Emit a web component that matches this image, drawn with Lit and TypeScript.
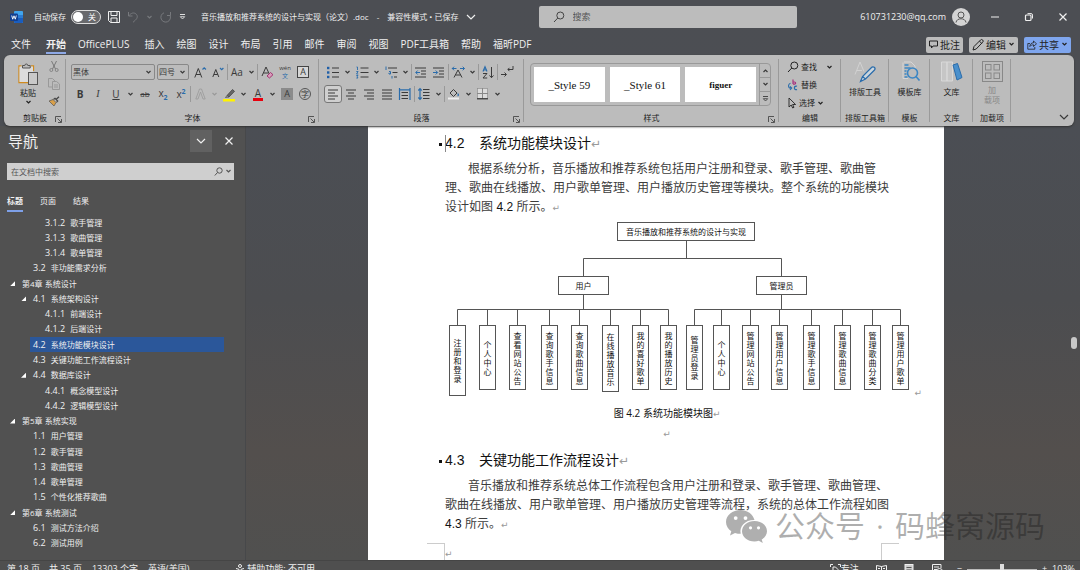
import { LitElement, html, svg, css, nothing, TemplateResult, SVGTemplateResult } from "lit";
import { customElement, state } from "lit/decorators.js";
import { classMap } from "lit/directives/class-map.js";
import { styleMap } from "lit/directives/style-map.js";

const icon = (w: number, h: number, body: SVGTemplateResult): TemplateResult =>
  html`<svg class="ic" width=${w} height=${h} viewBox="0 0 ${w} ${h}" fill="none" stroke="currentColor" aria-hidden="true">${body}</svg>`;

const chevron = icon(7, 5, svg`<path d="M1.500 1l2 2 2-2" stroke-width="1.200"/>`);
const chevronL = icon(10, 6, svg`<path d="M1 1l4 4 4-4" stroke-width="1.200"/>`);
const lens = icon(12, 12, svg`<circle cx="7.300" cy="4.500" r="3.500"/><path d="M4.800 7L1 11"/>`);
const launcher = icon(7, 7, svg`<path d="M.5 6V.5H6M2.500 2.500l3.500 3.500M6.500 3v3.500H3" stroke-width=".8"/>`);

const bars = (rows: number[][]) => svg`${rows.map(([x, y, w]) => svg`<path d="M${x} ${y}h${w}"/>`)}`;
const BLUE = "#2a6cab";

const I = {
  word: icon(13, 12, svg`<rect x="4" y="0" width="9" height="12" rx="1" fill="#41a5ee" stroke="none"/><path d="M4 4h9v3H4z" fill="#2b7cd3" stroke="none"/><path d="M4 7h9v4a1 1 0 0 1-1 1H5a1 1 0 0 1-1-1z" fill="#1a5dbe" stroke="none"/><rect x="0" y="2.500" width="8" height="7.500" rx="1" fill="#103f91" stroke="none"/><path d="M1.700 4.500l1 3.700L4 4.800l1.300 3.400 1-3.700" stroke="#fff" stroke-width=".9"/>`),
  save: icon(12, 12, svg`<path d="M.5 .5h11v11h-9l-2-2zM3 .5v4h6v-4M3 11.500v-4.500h6v4.500"/>`),
  undo: icon(12, 12, svg`<path d="M1.500 1v4h4M1.800 4.800C4 1.800 7 1.200 9 3s1.500 4.200-.5 6L6 11.300"/>`),
  redo: icon(12, 12, svg`<path d="M10.500 1v3.500H7M10 4.200A4.800 4.800 0 1 1 4 1.800"/>`),
  more: icon(7, 6, svg`<path d="M1 .5h5" stroke-width=".9"/><path d="M1.300 2.700h4.400L3.500 5z" stroke-width=".8"/>`),
  user: icon(18, 18, svg`<circle cx="9" cy="9" r="9" fill="#d4d4d4" stroke="none"/><circle cx="9" cy="7" r="3" stroke="#555"/><path d="M4 14.500c.5-5 9.500-5 10 0" stroke="#555"/>`),
  min: icon(8, 8, svg`<path d="M0 4h8"/>`),
  restore: icon(8, 8, svg`<rect x=".5" y="2" width="5.500" height="5.500" rx="1" stroke-width="1.200"/><path d="M2.500 .6h3.500a1.500 1.500 0 0 1 1.500 1.500v3.400"/>`),
  close: icon(8, 8, svg`<path d="M.5 .5l7 7M7.500 .5l-7 7" stroke-width="1.200"/>`),
  comment: icon(9, 9, svg`<path d="M.5 1h8v5H4L2.500 8V6h-2z"/>`),
  pen: icon(12, 12, svg`<path d="M1 11l1-3.500L8.500 1a1.400 1.400 0 0 1 2.200 2.200L4.200 10zM7.500 2.200l2.200 2.200"/>`),
  share: icon(10, 10, svg`<path d="M3 3.500H.8v5.700h7V7M2.800 6.500C3 4 4.500 2.800 6.500 2.800V1l3 2.800-3 2.700V4.800C5 4.800 3.800 5.200 2.800 6.500z" stroke-width=".8"/>`),
  paste: icon(20, 23, svg`<path d="M3.500 3h-2.500v16.500h9" stroke="#d08a1e" stroke-width="1.300"/><path d="M13 3h2.500v5" stroke="#d08a1e" stroke-width="1.300"/><path d="M1.500 3.500h13.500V19H1.500z" fill="#dcdcdc" stroke="none"/><path d="M4.500 5V2.500h2.300a1.500 1.500 0 0 1 3 0h2.400V5z" fill="#bcbcbc" stroke="#555"/><rect x="10.500" y="9.500" width="9" height="12" fill="#c9c9c9" stroke="#555"/>`),
  cut: icon(10, 11, svg`<path d="M2.500 0l4 8M7.500 0l-4 8" stroke="#666" stroke-width=".8"/><circle cx="2.300" cy="9" r="1.500" stroke="#777" stroke-width=".8"/><circle cx="7.700" cy="9" r="1.500" stroke="#777" stroke-width=".8"/>`),
  copy: icon(12, 12, svg`<path d="M4 9H.5V.5h4L7 3" stroke="#999"/><path d="M4.500 3.500H8.500L11.500 6v5.500h-7zM6 7h4M6 9h4" stroke="#999"/>`),
  brush: icon(12, 11, svg`<path d="M1 5l4-1.500 3 3L6 10z" fill="#d9a04a" stroke="#555" stroke-width=".7"/><path d="M5.500 3.500L7 2.300l2.700 2.800L8.400 6.400M8.300 3.300L11 .8" stroke="#444" stroke-width="1.200"/>`),
  grow: icon(13, 13, svg`<path d="M.8 11.500L4.300 2.500l3.500 9M2 8.500h4.600"/><path d="M8.500 3.500l1.700-1.700 1.700 1.700" stroke="${BLUE}" stroke-width="1.200"/>`),
  shrink: icon(12, 12, svg`<path d="M.8 11L3.800 3.500l3 7.500M2 8.500h3.700"/><path d="M8 2l1.700 1.700L11.400 2" stroke="${BLUE}" stroke-width="1.200"/>`),
  outline: icon(11, 12, svg`<path d="M.8 11L4.500 1h2l3.700 10H8L5.500 4 3 11z" stroke="#999" stroke-width=".8"/>`),
  fill: icon(15, 15, svg`<path d="M5 8.500L10.500 2.500l2 1.800L7 10z" fill="#666" stroke="#444" stroke-width=".8"/><path d="M5 8.500L3.500 10.500 7 10" stroke="#444" stroke-width=".7"/><rect x="1" y="12" width="12" height="2.500" fill="#fff200" stroke="none"/>`),
  eraser: icon(13, 13, svg`<path d="M1 10L5 1l3.500 7.500M2.500 7H7" /><path d="M6 10l3.500-3.500 2.500 2.200L8.500 12z" fill="#d99abb" stroke="#9b2d6a" stroke-width=".9"/>`),
  bullets: icon(13, 13, svg`<g stroke="#1f5fa8" stroke-width="2.400">${bars([[0, 2, 2.4], [0, 6.5, 2.4], [0, 11, 2.4]])}</g>${bars([[5, 2, 7], [5, 6.5, 7], [5, 11, 7]])}`),
  numbers: icon(13, 13, svg`<g stroke="${BLUE}" stroke-width=".9"><path d="M.5 1h1v3M.3 5.500h1.800L.5 8h1.700M.3 9.500h1.700l-.8 1.300 .8 1.200H.3"/></g>${bars([[4.5, 2, 8], [4.5, 6.5, 8], [4.5, 11, 8]])}`),
  levels: icon(13, 13, svg`<g stroke="${BLUE}"><path d="M1 .5v3.500M4 5.500h1.500V8H4V6.800M7 10v2.500"/></g>${bars([[3, 2, 9], [7.5, 6.5, 5], [9, 11, 3]])}`),
  outdent: icon(12, 11, svg`${bars([[0, 1, 11], [6, 4, 5], [6, 7, 5], [0, 10, 11]])}<path d="M5 5.500H1M2.700 3.500l-2 2 2 2" stroke="${BLUE}"/>`),
  indent: icon(12, 11, svg`${bars([[0, 1, 11], [6, 4, 5], [6, 7, 5], [0, 10, 11]])}<path d="M0 5.500h4.500M2.700 3.500l2 2-2 2" stroke="${BLUE}"/>`),
  scale: icon(13, 12, svg`<path d="M2 11.500L6 4l4 7.500M3.500 9h5"/><path d="M0 2.500h4.500M8 2.500h4.500M2 .7L.3 2.500 2 4.300M10.700 .7l1.800 1.800-1.800 1.800" stroke="${BLUE}"/>`),
  sort: icon(12, 13, svg`<path d="M1 5.500L3 .7l2 4.800M1.600 4h2.800" stroke="${BLUE}" stroke-width="1.200"/><path d="M1 7.500h4l-4 4.500h4.200M9.500 1v10.500M7.500 9.500l2 2.200 2-2.200"/>`),
  marks: icon(13, 12, svg`<path d="M12 0v3.500H7M8.500 1.800L6.800 3.500l1.700 1.700M0 8.500h5M3.500 6.500l2 2-2 2"/>`),
  left: icon(11, 11, bars([[0, 1, 10], [0, 4, 7], [0, 7, 10], [0, 10, 7]])),
  center: icon(11, 11, bars([[0, 1, 10], [2, 4, 6], [0, 7, 10], [2, 10, 6]])),
  right: icon(11, 11, bars([[0, 1, 10], [3, 4, 7], [0, 7, 10], [3, 10, 7]])),
  justify: icon(11, 11, bars([[0, 1, 10], [0, 4, 10], [0, 7, 10], [0, 10, 10]])),
  spread: icon(12, 12, svg`<path d="M.5 0v12M11 0v12M1 1.800h10" stroke="${BLUE}" stroke-width="1.200"/>${bars([[2.5, 4.5, 6.5], [2.5, 7.5, 6.5], [2.5, 10.5, 6.5]])}`),
  spacing: icon(12, 12, svg`<path d="M2 .5v11M.3 2.500L2 .7l1.700 1.800M.3 9.500L2 11.300l1.700-1.800" stroke="${BLUE}" stroke-width="1.200"/>${bars([[5, 1.5, 6.5], [5, 4.5, 6.5], [5, 7.5, 6.5], [5, 10.5, 6.5]])}`),
  bucket: icon(12, 12, svg`<path d="M2 5l3.500-3.500L9 5 5.500 8.500z"/><path d="M9.700 5.500c1 1.500 1 2-.1 2.300" stroke="${BLUE}" stroke-width="1.300"/><rect x="0" y="9.500" width="11" height="2" fill="#eee" stroke="none"/>`),
  borders: icon(12, 12, svg`<rect x=".5" y=".5" width="10" height="10" fill="#dcdcdc" stroke="#888" stroke-width=".6"/><path d="M5.500 0v11M0 5.500h11" stroke="#888"/><path d="M0 10.800h11" stroke="#333" stroke-width="1.200"/>`),
  replace: icon(12, 12, svg`<path d="M3.500 4.200A2.800 2.800 0 0 0 2.500 9h2.200M3 7.300l1.700 1.800L3 11" stroke="${BLUE}" stroke-width="1.100"/><path d="M6 .5V5M6 3h1.500a1 1 0 0 1 0 2.200H6" stroke="#a8327e" stroke-width="1.200"/><path d="M10 7.300a1.800 1.800 0 1 0 0 3.200" stroke="${BLUE}" stroke-width="1.200"/>`),
  pointer: icon(10, 12, svg`<path d="M2 1v9l2.200-2 1.500 3 1.300-.7L5.600 7.500h3z" stroke-width=".9"/>`),
  typeset: icon(22, 22, svg`<path d="M1 13.500L6 1l4 9.500M3 9.500h5" stroke="#d2d2d2"/><path d="M6.500 20.500l2-5L17.500 6.500a1.900 1.900 0 0 1 3 2.500L11.500 18zM8.500 15.500l3 2.500" stroke="${BLUE}" stroke-width="1.200" fill="#ccd6dd"/>`),
  template: icon(20, 22, svg`<path d="M4 1h7l4 4v3M3 1.500v16h5" stroke="#d6d6d6"/><path d="M4.500 4h4M4.500 7h6M4.500 10h2M4.500 13h2M4.500 16h3" stroke="#3b86c4" stroke-width="1.500"/><circle cx="12.500" cy="12" r="5" stroke="#3b86c4" stroke-width="1.600"/><path d="M16 15.500l3.500 4" stroke="#3b86c4" stroke-width="1.600"/>`),
  library: icon(22, 22, svg`<path d="M.5 1h5.500v19H.5zM6 1h5.500v19H6z" stroke="#d8d8d8" fill="#c6c6c6"/><path d="M12 4l4.500-1.500 4.500 14-5 2.500z" fill="#4a90cc" stroke="${BLUE}"/>`),
  addins: icon(21, 21, svg`<rect x=".5" y=".5" width="20" height="20"/><rect x="3.500" y="3.500" width="5.500" height="5.500"/><rect x="12" y="3.500" width="5.500" height="5.500"/><rect x="3.500" y="12" width="5.500" height="5.500"/><rect x="12" y="12" width="5.500" height="5.500"/>`),
  wechat: icon(41, 33, svg`<g stroke="none" fill="currentColor"><path fill-rule="evenodd" d="M14.500 0C6.500 0 0 5.300 0 12c0 3.800 2.100 7.100 5.300 9.300L4 25.500l5-2.600c1.800.6 3.800.9 5.700.9-1.700-7.500 4.500-14 13.800-13.800C27 4.200 21.300 0 14.500 0zM9.700 6.200a1.900 1.900 0 1 1 0 3.800 1.900 1.900 0 0 1 0-3.800zm9.800 0a1.900 1.900 0 1 1 0 3.800 1.900 1.900 0 0 1 0-3.800z"/><path fill-rule="evenodd" d="M28.500 11C21.500 11 16 15.600 16 21.200s5.500 10.200 12.500 10.200c1.500 0 3-.2 4.300-.6l4 2.100-1.100-3.500c3.200-1.900 5.300-4.800 5.300-8.200C41 15.600 35.500 11 28.500 11zm-4 5.200a1.600 1.600 0 1 1 0 3.200 1.600 1.600 0 0 1 0-3.200zm8 0a1.600 1.600 0 1 1 0 3.200 1.600 1.600 0 0 1 0-3.200z"/></g>`),
  access: icon(11, 11, svg`<circle cx="5" cy="2" r="1.500"/><path d="M1 4.500l3 .8v2L2.500 10M9 4.500L6 5.300v1.200M6 8.500l3 2M9 7.500l-3 3.500"/>`),
  focus: icon(11, 11, svg`<path d="M.5 3V.5H3M8 .5h2.500V3M3 10V3h2.500L8 5.500V10"/>`),
  read: icon(11, 11, svg`<path d="M.5 1.500L5.500 2.500l5-1V10h-10zM5.500 2.500V10M2 4.500h2M7 4.500h2M2 7h2M7 7h2"/>`),
  print: icon(11, 11, svg`<rect x="1" y=".5" width="8" height="11" fill="#ccc"/><path d="M2.500 3.500h5M2.500 6h5M2.500 8.500h5" stroke="#555"/>`),
  web: icon(11, 11, svg`<path d="M9 4V.5H.5V10H4M2 3h5M2 5.500h3"/><circle cx="7.500" cy="7.500" r="3"/>`),
};

interface Entry { lv: number; no: string; t: string; open?: boolean }
const OUTLINE: Entry[] = [
  { lv: 2, no: "3.1.2", t: "歌手管理" }, { lv: 2, no: "3.1.3", t: "歌曲管理" }, { lv: 2, no: "3.1.4", t: "歌单管理" },
  { lv: 1, no: "3.2", t: "非功能需求分析" },
  { lv: 0, no: "", t: "第4章 系统设计", open: true },
  { lv: 1, no: "4.1", t: "系统架构设计", open: true },
  { lv: 2, no: "4.1.1", t: "前端设计" }, { lv: 2, no: "4.1.2", t: "后端设计" },
  { lv: 1, no: "4.2", t: "系统功能模块设计" }, { lv: 1, no: "4.3", t: "关键功能工作流程设计" },
  { lv: 1, no: "4.4", t: "数据库设计", open: true },
  { lv: 2, no: "4.4.1", t: "概念模型设计" }, { lv: 2, no: "4.4.2", t: "逻辑模型设计" },
  { lv: 0, no: "", t: "第5章 系统实现", open: true },
  { lv: 1, no: "1.1", t: "用户管理" }, { lv: 1, no: "1.2", t: "歌手管理" }, { lv: 1, no: "1.3", t: "歌曲管理" },
  { lv: 1, no: "1.4", t: "歌单管理" }, { lv: 1, no: "1.5", t: "个性化推荐歌曲" },
  { lv: 0, no: "", t: "第6章 系统测试", open: true },
  { lv: 1, no: "6.1", t: "测试方法介绍" }, { lv: 1, no: "6.2", t: "测试用例" },
];

/* Diagram nodes: left edge, width, top, height on the drawing canvas */
interface Node { x: number; w: number; y: number; h: number; t: string; v?: boolean }
const leaf = (x: number, t: string, h = 65): Node => ({ x, w: 17, y: 103, h, t, v: true });
const LEAVES_A = [leaf(4, "注册和登录", 71), leaf(34, "个人中心"), leaf(64, "查看网站公告"), leaf(96, "查询歌手信息"), leaf(126, "查询歌曲信息"), leaf(157, "在线播放音乐", 67), leaf(187, "我的喜好歌单"), leaf(215, "我的播放历史")];
const LEAVES_B = [leaf(241, "管理员登录"), leaf(268, "个人中心"), leaf(297, "管理网站公告"), leaf(326, "管理用户信息"), leaf(358, "管理歌手信息"), leaf(389, "管理歌曲信息"), leaf(419, "管理歌曲分类"), leaf(447, "管理用户歌单")];
const NODES: Node[] = [
  { x: 172, w: 138, y: 0, h: 19, t: "音乐播放和推荐系统的设计与实现" },
  { x: 113, w: 51, y: 54, h: 19, t: "用户" },
  { x: 311, w: 51, y: 54, h: 19, t: "管理员" },
  ...LEAVES_A, ...LEAVES_B,
];
const mid = (n: Node) => n.x + Math.floor(n.w / 2) + 0.5;
const comb = (ns: Node[], stem: number) =>
  `M${stem} 73V87.5M${mid(ns[0])} 87.5H${mid(ns[ns.length - 1])}` + ns.map((n) => `M${mid(n)} 87.5V103`).join("");
const WIRES = "M241.500 19V36.500M138.500 54V36.500H336.500V54" + comb(LEAVES_A, 138.5) + comb(LEAVES_B, 336.5);

@customElement("app-root")
export class AppRoot extends LitElement {
  @state() private selected = 8;

  static styles = css`
    :host { display: flex; flex-direction: column; height: 100vh; overflow: hidden; color: #f0f0f0;
      background: linear-gradient(180deg, #4c4e53 0, #4b4e53 50%, #50504f 100%);
      font: 8px/12px "Open Sans", "Noto Sans CJK SC", sans-serif; }
    * { box-sizing: border-box; }
    button, select, input { font: inherit; color: inherit; background: none; border: 0; padding: 0; margin: 0; border-radius: 0; }
    button { display: inline-flex; align-items: center; justify-content: center; white-space: nowrap; }
    select { appearance: none; }
    .ic { flex: none; display: block; overflow: visible; }
    .row { display: flex; align-items: center; }

    .title { flex: none; height: 34px; display: grid; grid-template-columns: 1.9fr 258px 1fr; align-items: center; }
    .tl { padding-left: 10px; min-width: 0; white-space: nowrap; }
    .auto { display: flex; align-items: center; gap: 5px; margin: 0 7px 0 11px; }
    .toggle { position: relative; appearance: none; width: 30px; height: 14px; margin: 0; border: 1px solid #ddd; border-radius: 7px; background: #68696c; }
    .toggle::before { content: ""; position: absolute; left: 1px; top: 1px; width: 10px; height: 10px; border-radius: 5px; background: #fff; }
    .toggle::after { content: "关"; position: absolute; left: 16px; top: 0; line-height: 12px; color: #fff; }
    .dim { color: #77797d; }
    .qat { gap: 7px; }
    .doc { margin-left: 15px; gap: 8px; }
    .find { display: flex; align-items: center; gap: 8px; height: 22px; padding: 0 14px; background: #bcbcbc; color: #444; border-radius: 2px; }
    .find input { flex: 1; min-width: 0; font-size: 9px; outline: 0; }
    .find input::placeholder { color: #555; opacity: 1; }
    .tr { justify-content: flex-end; padding-right: 13px; }
    .mail { font-size: 9px; margin-right: 6px; }
    .win { gap: 26px; margin-left: 21px; }

    .tabs { flex: none; height: 21px; padding: 0 9px 0 11px; font-size: 10px; gap: 12px; }
    .tabs button { height: 19px; border-bottom: 2px solid transparent; }
    .tabs .sp { margin-right: 3px; }
    .tabs .on { font-weight: 700; border-color: #8ea9e6; }
    .acts { margin-left: auto; gap: 6px; }
    .tabs .act { height: 16px; padding: 0 3px; gap: 2px; border: 0; border-radius: 2px; background: #bcbcbc; color: #222; }
    .tabs .share { background: #7fa6ee; }

    .ribbon { flex: none; margin: 0 6px 0 4px; height: 71px; display: grid; position: relative; z-index: 1;
      grid-template-columns: 62px 253px 205px 255px 62px 48px 41px 43px 38px 1fr;
      background: #bcbcbc; color: #3a3a3a; border-radius: 6px; box-shadow: 0 1px 2px #333; }
    .grp { display: flex; flex-direction: column; padding: 6px 0 2px 5px; position: relative; min-width: 0; }
    .grp:not(:last-child)::after { content: ""; position: absolute; right: 0; top: 4px; bottom: 4px; width: 1px; background: #9a9a9a; }
    .gl { margin-top: auto; text-align: center; color: #222; padding-right: 5px; white-space: nowrap; }
    .slim { padding-left: 0; }
    .slim .gl { padding: 0; }
    .launch { position: absolute; right: 4px; bottom: 3px; }
    .r { display: flex; align-items: center; height: 22px; }
    .c { width: 18px; height: 18px; font-size: 10px; flex: none; }
    .v { width: 11px; height: 18px; flex: none; }
    .s { width: 1px; height: 16px; background: #999; flex: none; }
    .on-c { border: 1px solid #777; border-radius: 3px; background: #cfcfcf; }
    .pick { position: relative; display: flex; align-items: center; border: 1px solid #888; border-radius: 2px; height: 16px; margin-right: 2px; }
    .pick select { width: 100%; padding-left: 1px; }
    .pick .ic { position: absolute; right: 2px; pointer-events: none; }
    .w84 { width: 84px; } .w32 { width: 32px; }
    .b { font-weight: 700; } .i { font-style: italic; font-family: "Liberation Serif"; } .u { text-decoration: underline; }
    .abc { text-decoration: line-through; font-size: 8px; }
    .ss { font-size: 7px; line-height: 7px; color: #2a6cab; font-weight: 700; }
    .ghost { color: #999; }
    .red { display: block; line-height: 10px; border-bottom: 3px solid #e8000d; padding: 0 2px; }
    .boxed { border: 1px solid #444; background: #d6d6d6; width: 12px; line-height: 10px; font-size: 9px; }
    .shade { background: #8b8b8b; width: 12px; line-height: 12px; font-size: 9px; }
    .ring { border: 1px solid #555; border-radius: 6px; width: 12px; line-height: 10px; font-size: 8px; }
    .wen { display: flex; flex-direction: column; font-size: 6px; line-height: 8px; }
    .wen b { color: #2a6cab; font-weight: 400; line-height: 9px; }

    .clip { display: grid; grid-template-columns: 34px 18px; margin-left: 2px; }
    .paste { flex-direction: column; gap: 1px; color: #222; }
    .mini { display: flex; flex-direction: column; align-items: center; gap: 6px; }
    .gallery { display: flex; border: 1px solid #999; border-radius: 4px; height: 43px; padding: 3px 0 3px 3px; gap: 5px; margin: 2px 8px 0 1px; }
    .gallery .card { flex: 1; background: #fff; color: #111; font: 11px/34px "Liberation Serif", serif; }
    .gallery .b { font-size: 9px; font-weight: 700; }
    .steps { flex: none; width: 11px; display: flex; flex-direction: column; margin: -3px 0 -3px -2px; border-left: 1px solid #999; }
    .steps button { flex: 1; border-bottom: 1px solid #999; }
    .steps button:last-child { border: 0; }
    .flip { transform: rotate(180deg); }
    .edit { display: flex; flex-direction: column; align-items: flex-start; gap: 6px; padding-left: 3px; color: #222; }
    .edit button { gap: 2px; height: 12px; }
    .edit .far { margin-left: 7px; }
    .tool { flex-direction: column; color: #222; gap: 3px; margin-right: 5px; }
    .slim .tool { margin-right: 0; }
    .off { color: #888; line-height: 10px; }
    .fold { position: absolute; right: 5px; bottom: 6px; }

    main { flex: 1; min-height: 0; display: flex; }
    nav { flex: none; width: 246px; display: flex; flex-direction: column; background: #515151; border-right: 1px solid #47484a; padding: 4px 0 9px; }
    .nh { padding: 0 12px 0 8px; justify-content: space-between; height: 22px; }
    h1 { margin: 0; font-size: 15px; line-height: 22px; font-weight: 400; }
    .nb { gap: 13px; }
    .drop { width: 22px; height: 22px; background: #616161; }
    .ns { display: flex; align-items: center; gap: 2px; margin: 11px 11px 0 7px; height: 17px; padding: 0 2px 0 4px; background: #cfcfcf; color: #555; }
    .ns input { flex: 1; min-width: 0; outline: 0; }
    .ns input::placeholder { color: #555; opacity: 1; }
    .ntabs { display: flex; gap: 17px; padding: 12px 0 3px 7px; }
    .ntabs button { height: 20px; border-bottom: 2px solid transparent; }
    .ntabs .on { font-weight: 700; border-color: #7ea0e8; }
    .tree { flex: 1; min-height: 0; display: flex; flex-direction: column; margin: 0 21px 0 0; padding: 0; list-style: none; }
    .tree li { flex: 1; display: flex; min-height: 0; }
    .tree button { flex: 1; justify-content: flex-start; position: relative; }
    .lv0 { margin-left: 19px; } .lv1 { margin-left: 30px; } .lv2 { margin-left: 42px; }
    .tree button { padding-left: 3px; }
    .tree .sel { background: #2b579a; }
    .no { font-size: 9px; margin-right: 5px; }
    .tri { position: absolute; left: -9px; width: 5px; height: 5px; background: #fff; clip-path: polygon(100% 0, 100% 100%, 0 100%); }

    .desk { flex: 1; min-width: 0; display: flex; justify-content: center; position: relative;
      background: linear-gradient(180deg, #4b4e54 0, #4c4d50 40%, #534f4d 75%, #50504f 100%); }
    .side { flex: 123; } .side2 { flex: 134; display: flex; justify-content: flex-end; align-items: center; padding-right: 3px; }
    .thumb { width: 6px; height: 12px; border-radius: 3px; background: #c8c8c8; }
    article { flex: none; width: 576px; background: #fff; color: #3c3c3c; padding: 6px 0 0 77px; overflow: hidden; display: flex; flex-direction: column; white-space: nowrap; }
    h2 { margin: 0; font: 14px/22px "Liberation Sans", "Noto Sans CJK SC", sans-serif; color: #111; position: relative; }
    h2::before { content: ""; position: absolute; left: -6px; top: 11px; width: 3px; height: 3px; background: #111; }
    .hn { display: inline-block; width: 34px; }
    .caret { position: absolute; left: 0; top: 3px; width: 1px; height: 17px; background: #888; }
    .ret { font-family: "DejaVu Sans"; font-size: 9px; line-height: 9px; color: #999; font-weight: 400; }
    h2 .ret { font-size: 12px; }
    p { margin: 6px 0 0; font: 12px/19px "Liberation Sans", "Noto Sans CJK SC", sans-serif; }
    .ind { padding-left: 23px; }
    .num { color: #111; }
    figure { margin: 5px 0 0; position: relative; width: 480px; height: 176px; flex: none; }
    .wires { position: absolute; inset: 0; }
    .node { position: absolute; border: 1px solid #555; display: flex; align-items: center; justify-content: center; color: #111; background: #fff; line-height: 9px; }
    .vt { width: 8px; white-space: normal; word-break: break-all; }
    .end { position: absolute; right: 3px; bottom: 0; }
    figcaption { text-align: center; width: 444px; color: #111; font-size: 10px; line-height: 16px; margin-top: 7px; }
    .blank { text-align: center; width: 444px; line-height: 19px; margin: 3px 0 6px; }
    .corners { margin: auto 45px 0 -18px; display: flex; justify-content: space-between; height: 17px; }
    .corners span { width: 18px; }
    .cl, .cr { border-top: 1px solid #ccc; }
    .cl { border-right: 1px solid #ccc; } .cr { border-left: 1px solid #ccc; }
    .cl .ret { position: absolute; margin: 6px 0 0 18px; }
    .mark { position: absolute; right: 35px; bottom: 12px; display: flex; align-items: center; gap: 8px; color: rgba(20, 20, 20, .34); font-size: 30px; line-height: 44px; white-space: nowrap; pointer-events: none; z-index: 2; }
    .mark .words { display: flex; gap: 11px; }

    footer { flex: none; height: 10px; display: flex; align-items: flex-start; background: #4f4f4f; border-top: 1px solid #454545; padding: 1px 5px 0 7px; white-space: nowrap; font-size: 9px; line-height: 14px; }
    footer > * { margin-right: 10px; }
    footer .gap { margin-left: 36px; gap: 1px; }
    footer .view { margin-left: auto; gap: 17px; margin-right: 14px; }
    footer .zoom { margin: 0; gap: 5px; }
    .slider { appearance: none; width: 70px; height: 12px; margin: 0; background: linear-gradient(#bbb, #bbb) center / 100% 1px no-repeat; }
    .slider::-webkit-slider-thumb { appearance: none; width: 4px; height: 10px; background: #ddd; }
  `;

  private c(label: string, body: unknown, cls = "") {
    return html`<button class="c ${cls}" aria-label=${label}>${body}</button>`;
  }
  private v = html`<button class="v" aria-label="更多选项">${chevron}</button>`;
  private s = html`<span class="s"></span>`;

  private titleBar() {
    return html`<header class="title">
      <div class="row tl">${I.word}
        <label class="auto">自动保存<input type="checkbox" class="toggle" /></label>
        <div class="row qat"><button aria-label="保存">${I.save}</button><button class="dim" aria-label="撤消">${I.undo}</button><span class="dim">${chevron}</span><button class="dim" aria-label="恢复">${I.redo}</button><button aria-label="自定义快速访问工具栏">${I.more}</button></div>
        <div class="row doc"><span>音乐播放和推荐系统的设计与实现（论文）.doc</span><span>-</span><span>兼容性模式 • 已保存</span>${chevronL}</div>
      </div>
      <label class="find">${lens}<input placeholder="搜索" aria-label="搜索" /></label>
      <div class="row tr"><span class="mail">610731230@qq.com</span>${I.user}
        <div class="row win"><button aria-label="最小化">${I.min}</button><button aria-label="还原">${I.restore}</button><button aria-label="关闭">${I.close}</button></div>
      </div>
    </header>`;
  }

  private tabs() {
    const names = ["文件", "开始", "OfficePLUS", "插入", "绘图", "设计", "布局", "引用", "邮件", "审阅", "视图", "PDF工具箱", "帮助", "福昕PDF"];
    return html`<div class="row tabs">
      ${names.map((n, i) => html`<button class=${classMap({ on: i === 1, sp: i === 0 || i === 2 })}>${n}</button>`)}
      <div class="row acts"><button class="act">${I.comment}批注</button><button class="act">${I.pen}编辑${chevron}</button><button class="act share">${I.share}共享${chevron}</button></div>
    </div>`;
  }

  private label(t: string, launch = true) {
    return html`<div class="gl">${t}</div>${launch ? html`<button class="launch" aria-label="${t}设置">${launcher}</button>` : nothing}`;
  }

  private ribbon() {
    const { c, v, s } = this;
    return html`<section class="ribbon">
      <div class="grp"><div class="clip"><button class="paste">${I.paste}<span>粘贴</span>${chevron}</button>
        <div class="mini"><button aria-label="剪切">${I.cut}</button><button aria-label="复制">${I.copy}</button><button aria-label="格式刷">${I.brush}</button></div></div>${this.label("剪贴板")}</div>
      <div class="grp">
        <div class="r"><span class="pick w84"><select aria-label="字体"><option>黑体</option></select>${chevron}</span><span class="pick w32"><select aria-label="字号"><option>四号</option></select>${chevron}</span>
          ${c("增大字号", I.grow)}${c("减小字号", I.shrink)}${s}${c("更改大小写", "Aa")}${v}${s}${c("清除格式", I.eraser)}${c("拼音指南", html`<span class="wen">wén<b>文</b></span>`)}${c("字符边框", html`<span class="boxed">A</span>`)}</div>
        <div class="r">${c("加粗", "B", "b")}${c("倾斜", "I", "i")}${c("下划线", "U", "u")}${v}${c("删除线", "ab", "abc")}${c("下标", html`<span>x<sub class="ss">2</sub></span>`)}${c("上标", html`<span>x<sup class="ss">2</sup></span>`)}${s}${c("文本效果", I.outline)}<span class="ghost">${v}</span>${c("突出显示", I.fill)}${v}${c("字体颜色", html`<span class="red">A</span>`)}${v}${c("字符底纹", html`<span class="shade">A</span>`)}${c("带圈字符", html`<span class="ring">字</span>`)}</div>
        ${this.label("字体")}</div>
      <div class="grp">
        <div class="r">${c("项目符号", I.bullets)}${v}${c("编号", I.numbers)}${v}${c("多级列表", I.levels)}${v}${s}${c("减少缩进", I.outdent)}${c("增加缩进", I.indent)}${s}${c("中文版式", I.scale)}${v}${s}${c("排序", I.sort)}${s}${c("编辑标记", I.marks)}</div>
        <div class="r">${c("左对齐", I.left, "on-c")}${c("居中", I.center)}${c("右对齐", I.right)}${c("两端对齐", I.justify)}${c("分散对齐", I.spread)}${s}${c("行距", I.spacing)}${v}${s}${c("底纹", I.bucket)}${v}${c("边框", I.borders)}${v}</div>
        ${this.label("段落")}</div>
      <div class="grp"><div class="gallery"><button class="card">_Style 59</button><button class="card">_Style 61</button><button class="card b">figuer</button>
        <div class="steps"><button aria-label="上一行"><span class="flip">${chevron}</span></button><button aria-label="下一行">${chevron}</button><button aria-label="其他">${I.more}</button></div></div>${this.label("样式")}</div>
      <div class="grp"><div class="edit"><button>${lens}查找<span class="far">${chevron}</span></button><button>${I.replace}替换</button><button>${I.pointer}选择${chevron}</button></div>${this.label("编辑", false)}</div>
      <div class="grp slim"><button class="tool">${I.typeset}排版工具</button>${this.label("排版工具箱", false)}</div>
      <div class="grp slim"><button class="tool">${I.template}模板库</button>${this.label("模板", false)}</div>
      <div class="grp slim"><button class="tool">${I.library}文库</button>${this.label("文库", false)}</div>
      <div class="grp slim"><button class="tool off">${I.addins}<span>加<br />载项</span></button>${this.label("加载项", false)}</div>
      <div class="grp"><button class="fold" aria-label="折叠功能区">${chevronL}</button></div>
    </section>`;
  }

  private navPane() {
    return html`<nav>
      <div class="row nh"><h1>导航</h1><div class="row nb"><button class="drop" aria-label="任务窗格选项">${chevronL}</button><button aria-label="关闭导航">${I.close}</button></div></div>
      <label class="ns"><input placeholder="在文档中搜索" aria-label="在文档中搜索" />${icon(9, 9, svg`<circle cx="5.500" cy="3.500" r="2.700"/><path d="M3.500 5.500L.8 8.500"/>`)}${chevron}</label>
      <div class="ntabs"><button class="on">标题</button><button>页面</button><button>结果</button></div>
      <ul class="tree">${OUTLINE.map((e, i) => html`<li><button class=${classMap({ [`lv${e.lv}`]: true, sel: i === this.selected })} @click=${() => (this.selected = i)}>
        ${e.open ? html`<span class="tri"></span>` : nothing}${e.no ? html`<span class="no">${e.no}</span>` : nothing}${e.t}</button></li>`)}</ul>
    </nav>`;
  }

  private page() {
    const ret = html`<span class="ret">↵</span>`;
    return html`<article>
      <h2><span class="caret"></span><span class="hn">4.2</span>系统功能模块设计${ret}</h2>
      <p><span class="ind">根据系统分析，音乐播放和推荐系统包括用户注册和登录、歌手管理、歌曲管</span><br />理、歌曲在线播放、用户歌单管理、用户播放历史管理等模块。整个系统的功能模块<br />设计如图 <span class="num">4.2</span> 所示。${ret}</p>
      <figure>
        <svg class="wires" width="480" height="176" fill="none" stroke="#555" aria-hidden="true"><path d=${WIRES} /></svg>
        ${NODES.map((n) => html`<div class="node" style=${styleMap({ left: `${n.x}px`, top: `${n.y}px`, width: `${n.w}px`, height: `${n.h}px` })}><span class=${n.v ? "vt" : ""}>${n.t}</span></div>`)}
        <span class="ret end">↵</span>
      </figure>
      <figcaption>图 4.2  系统功能模块图${ret}</figcaption>
      <div class="blank">${ret}</div>
      <h2><span class="hn">4.3</span>关键功能工作流程设计${ret}</h2>
      <p><span class="ind">音乐播放和推荐系统总体工作流程包含用户注册和登录、歌手管理、歌曲管理、</span><br />歌曲在线播放、用户歌单管理、用户播放历史管理等流程，系统的总体工作流程如图<br /><span class="num">4.3</span> 所示。${ret}</p>
      <div class="corners"><span class="cl">${ret}</span><span class="cr"></span></div>
    </article>`;
  }

  render() {
    return html`${this.titleBar()}${this.tabs()}${this.ribbon()}
      <main>${this.navPane()}
        <div class="desk"><div class="side"></div>${this.page()}<div class="side2"><span class="thumb"></span></div>
          <div class="mark">${I.wechat}<span class="words"><span>公众号</span><span>·</span><span>码蜂窝源码</span></span></div></div>
      </main>
      <footer><span>第 18 页，共 35 页</span><span>13303 个字</span><span>英语(美国)</span><span class="row gap">${I.access}辅助功能: 不可用</span>
        <div class="row view"><span class="row">${I.focus}专注</span>${I.read}${I.print}${I.web}</div>
        <div class="row zoom"><span>−</span><input class="slider" type="range" aria-label="缩放" /><span>+</span><span>103%</span></div></footer>`;
  }
}
